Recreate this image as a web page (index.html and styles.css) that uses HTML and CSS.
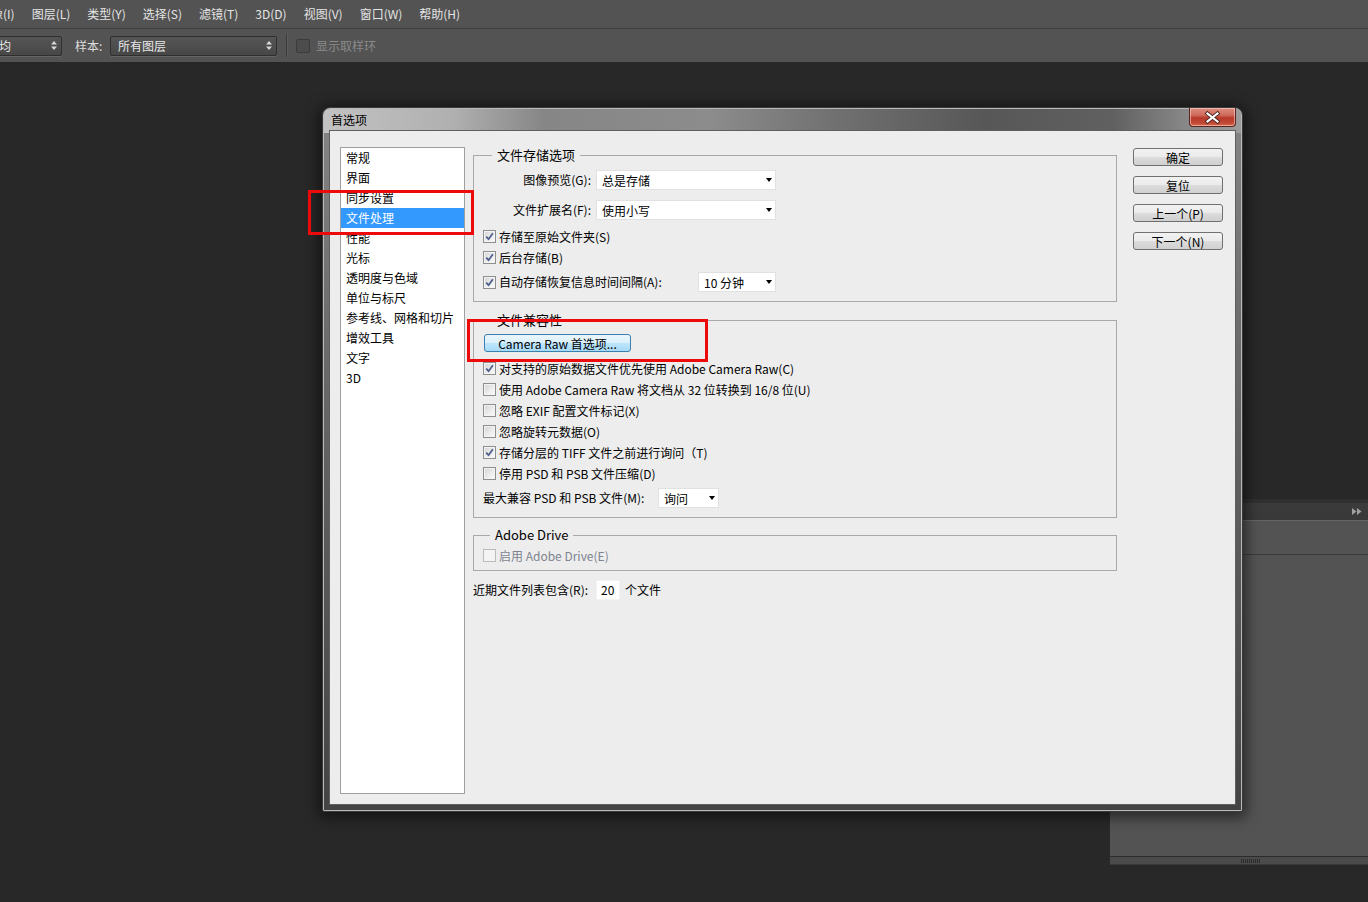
FILE: index.html
```html
<!DOCTYPE html>
<html lang="zh-CN">
<head>
<meta charset="utf-8">
<title>首选项</title>
<link rel="stylesheet" href="styles.css">
</head>
<body>
<div class="menubar">
  <span class="mi first">图像(I)</span>
  <span class="mi">图层(L)</span>
  <span class="mi">类型(Y)</span>
  <span class="mi">选择(S)</span>
  <span class="mi">滤镜(T)</span>
  <span class="mi">3D(D)</span>
  <span class="mi">视图(V)</span>
  <span class="mi">窗口(W)</span>
  <span class="mi">帮助(H)</span>
</div>
<div class="optbar">
  <div class="obox obox-a"><span>平均</span><svg class="updown" width="6" height="9" viewBox="0 0 6 9"><polygon points="0,3.5 3,0 6,3.5"/><polygon points="0,5.5 3,9 6,5.5"/></svg></div>
  <span class="olabel">样本:</span>
  <div class="obox obox-b"><span>所有图层</span><svg class="updown" width="6" height="9" viewBox="0 0 6 9"><polygon points="0,3.5 3,0 6,3.5"/><polygon points="0,5.5 3,9 6,5.5"/></svg></div>
  <div class="osep"></div>
  <div class="ocheck"></div>
  <span class="odisabled">显示取样环</span>
</div>
<div class="workspace">
  <div class="panel">
    <div class="ptabbar"><svg width="10" height="7" viewBox="0 0 10 7"><polygon points="0,0 4.5,3.5 0,7" fill="#a0a0a0"/><polygon points="5,0 9.5,3.5 5,7" fill="#a0a0a0"/></svg></div>
    <div class="psection"></div>
    <div class="pbody"></div>
    <div class="pfoot"><div class="grip"></div></div>
  </div>

  <div class="dialog">
    <div class="titlebar">
      <span class="title">首选项</span>
      <div class="close">
        <svg width="45" height="17" viewBox="0 0 45 17"><path d="M17.5 4.5 L27.5 12.5 M27.5 4.5 L17.5 12.5" stroke="#4a2420" stroke-width="4" stroke-linecap="square"/><path d="M17.5 4.5 L27.5 12.5 M27.5 4.5 L17.5 12.5" stroke="#ffffff" stroke-width="2.2" stroke-linecap="square"/></svg>
      </div>
    </div>
    <div class="client">
      <ul class="navlist">
        <li>常规</li>
        <li>界面</li>
        <li>同步设置</li>
        <li class="sel">文件处理</li>
        <li>性能</li>
        <li>光标</li>
        <li>透明度与色域</li>
        <li>单位与标尺</li>
        <li>参考线、网格和切片</li>
        <li>增效工具</li>
        <li>文字</li>
        <li>3D</li>
      </ul>

      <div class="main">
        <div class="group g1">
          <div class="group-title">文件存储选项</div>
          <div class="row field r-first">
            <span class="flabel">图像预览(G):</span>
            <div class="combo w180"><span>总是存储</span><i class="arrow"></i></div>
          </div>
          <div class="row field r-gap10">
            <span class="flabel">文件扩展名(F):</span>
            <div class="combo w180"><span>使用小写</span><i class="arrow"></i></div>
          </div>
          <div class="row check r-gap6">
            <span class="cb on"><svg width="11" height="11" viewBox="0 0 11 11"><path d="M2.2 5.6 L4.6 8.2 L8.9 2.3" fill="none" stroke="#4d5f8c" stroke-width="1.8"/></svg></span>
            <span class="txt">存储至原始文件夹(S)</span>
          </div>
          <div class="row check">
            <span class="cb on"><svg width="11" height="11" viewBox="0 0 11 11"><path d="M2.2 5.6 L4.6 8.2 L8.9 2.3" fill="none" stroke="#4d5f8c" stroke-width="1.8"/></svg></span>
            <span class="txt">后台存储(B)</span>
          </div>
          <div class="row field r-gap4">
            <div class="checklabel w215">
              <span class="cb on"><svg width="11" height="11" viewBox="0 0 11 11"><path d="M2.2 5.6 L4.6 8.2 L8.9 2.3" fill="none" stroke="#4d5f8c" stroke-width="1.8"/></svg></span>
              <span class="txt">自动存储恢复信息时间间隔(A):</span>
            </div>
            <div class="combo w78"><span>10 分钟</span><i class="arrow"></i></div>
          </div>
        </div>

        <div class="group g2">
          <div class="group-title">文件兼容性</div>
          <button class="hotbtn">Camera Raw 首选项...</button>
          <div class="row check r-gap6">
            <span class="cb on"><svg width="11" height="11" viewBox="0 0 11 11"><path d="M2.2 5.6 L4.6 8.2 L8.9 2.3" fill="none" stroke="#4d5f8c" stroke-width="1.8"/></svg></span>
            <span class="txt">对支持的原始数据文件优先使用 Adobe Camera Raw(C)</span>
          </div>
          <div class="row check">
            <span class="cb"></span>
            <span class="txt">使用 Adobe Camera Raw 将文档从 32 位转换到 16/8 位(U)</span>
          </div>
          <div class="row check">
            <span class="cb"></span>
            <span class="txt">忽略 EXIF 配置文件标记(X)</span>
          </div>
          <div class="row check">
            <span class="cb"></span>
            <span class="txt">忽略旋转元数据(O)</span>
          </div>
          <div class="row check">
            <span class="cb on"><svg width="11" height="11" viewBox="0 0 11 11"><path d="M2.2 5.6 L4.6 8.2 L8.9 2.3" fill="none" stroke="#4d5f8c" stroke-width="1.8"/></svg></span>
            <span class="txt">存储分层的 TIFF 文件之前进行询问（T)</span>
          </div>
          <div class="row check">
            <span class="cb"></span>
            <span class="txt">停用 PSD 和 PSB 文件压缩(D)</span>
          </div>
          <div class="row field r-gap4">
            <span class="plainlabel w175">最大兼容 PSD 和 PSB 文件(M):</span>
            <div class="combo w61"><span>询问</span><i class="arrow"></i></div>
          </div>
        </div>

        <div class="group g3">
          <div class="group-title">Adobe Drive</div>
          <div class="row check r-gap2 disabled">
            <span class="cb off"></span>
            <span class="txt">启用 Adobe Drive(E)</span>
          </div>
        </div>

        <div class="row field recent">
          <span class="plainlabel w123">近期文件列表包含(R):</span>
          <div class="numbox">20</div>
          <span class="suffix">个文件</span>
        </div>
      </div>

      <div class="buttons">
        <button class="btn">确定</button>
        <button class="btn">复位</button>
        <button class="btn">上一个(P)</button>
        <button class="btn">下一个(N)</button>
      </div>
    </div>
  </div>
</div>
<div class="mark mark1"></div>
<div class="mark mark2"></div>
</body>
</html>
```

FILE: styles.css
```css
* { box-sizing: border-box; }

html, body {
  margin: 0;
  padding: 0;
}

body {
  width: 1368px;
  height: 902px;
  overflow: hidden;
  position: relative;
  background: #282828;
  font-family: "Noto Sans CJK SC", "Noto Sans", sans-serif;
  font-size: 12px;
  display: flex;
  flex-direction: column;
}

/* ---------- Photoshop menu bar ---------- */
.menubar {
  height: 29px;
  flex: 0 0 29px;
  background: #535353;
  border-bottom: 1px solid #3d3d3d;
  display: flex;
  align-items: center;
  gap: 17px;
  color: #e4e4e4;
  white-space: nowrap;
  line-height: 16px;
}
.menubar .first { margin-left: -21px; }

/* ---------- options bar ---------- */
.optbar {
  height: 33px;
  flex: 0 0 33px;
  background: #535353;
  display: flex;
  align-items: center;
  color: #dcdcdc;
  white-space: nowrap;
}
.obox {
  height: 20px;
  display: flex;
  align-items: center;
  border: 1px solid #2f2f2f;
  border-radius: 2px;
  background: linear-gradient(#555555, #474747);
  box-shadow: 0 1px 0 #656565;
  color: #e8e8e8;
  padding-right: 4px;
}
.obox span { flex: 1; }
.obox-a { width: 82px; margin-left: -20px; padding-left: 6px; }
.obox-b { width: 167px; padding-left: 7px; }
.updown { fill: #d8d8d8; }
.olabel { margin-left: 13px; width: 35px; }
.osep {
  width: 2px;
  height: 23px;
  margin-left: 9px;
  background: #3a3a3a;
  border-right: 1px solid #5e5e5e;
}
.ocheck {
  width: 14px;
  height: 14px;
  margin-left: 8px;
  border: 1px solid #3b3b3b;
  border-radius: 2px;
  background: #4c4c4c;
}
.odisabled { margin-left: 6px; color: #8a8a8a; }

/* ---------- workspace ---------- */
.workspace {
  flex: 1;
  position: relative;
}

/* floating panel */
.panel {
  position: absolute;
  left: 1109px;
  top: 437px;
  width: 259px;
  height: 366px;
  border-left: 1px solid #2a2a2a;
  display: flex;
  flex-direction: column;
  background: #535353;
}
.ptabbar {
  height: 22px;
  flex: 0 0 22px;
  background: linear-gradient(#303030 0, #303030 4px, #3b3b3b 4px, #393939 100%);
  border-bottom: 1px solid #666666;
  display: flex;
  justify-content: flex-end;
  align-items: center;
  padding: 4px 6px 0 0;
}
.psection {
  height: 34px;
  flex: 0 0 34px;
  background: #535353;
  border-bottom: 1px solid #3a3a3a;
  box-shadow: 0 1px 0 #5d5d5d;
}
.pbody { flex: 1; background: #535353; }
.pfoot {
  height: 9px;
  flex: 0 0 9px;
  border-top: 1px solid #2c2c2c;
  border-bottom: 1px solid #3a3a3a;
  background: #4b4b4b;
  display: flex;
  align-items: center;
}
.grip {
  margin-left: 131px;
  width: 20px;
  height: 4px;
  background: repeating-linear-gradient(90deg, #2b2b2b 0, #2b2b2b 1px, transparent 1px, transparent 2px);
}

/* ---------- dialog window ---------- */
.dialog {
  position: absolute;
  left: 323px;
  top: 46px;
  width: 919px;
  height: 703px;
  border: 1px solid #b9b9b9;
  border-radius: 7px 7px 1px 1px;
  padding: 0 5px 5px;
  display: flex;
  flex-direction: column;
  background:
    linear-gradient(90deg, #c2c2c2 0%, #b0b0b0 14%, #868686 24%, #8c8c8c 42%, #707070 56%, #575757 72%, #606060 86%, #888888 94%, #9c9c9c 100%) top / 100% 24px no-repeat,
    linear-gradient(#858585 0%, #6a6a6a 35%, #444444 100%);
  box-shadow: 0 0 0 1px #3a3a3a, 0 2px 14px 4px rgba(0, 0, 0, 0.55);
}
.titlebar {
  height: 21px;
  flex: 0 0 21px;
  display: flex;
  align-items: flex-start;
}
.title {
  margin: 3px 0 0 2px;
  line-height: 16px;
  color: #000;
}
.close {
  margin-left: auto;
  margin-top: -1px;
  width: 47px;
  height: 19px;
  border: 1px solid #5a2520;
  border-top: 0;
  border-radius: 0 0 4px 4px;
  background: linear-gradient(#dc8d80 0%, #cf6a5a 40%, #b8392a 55%, #c24a35 85%, #d86f52 100%);
  box-shadow: inset 0 0 0 1px rgba(255, 220, 210, 0.55);
  display: flex;
  align-items: center;
  justify-content: center;
}

.client {
  flex: 1;
  border: 1px solid #5f5f5f;
  background: #ededed;
  display: flex;
  align-items: stretch;
  padding: 16px 12px 10px 10px;
  color: #000;
}

/* left navigation list */
.navlist {
  list-style: none;
  margin: 0;
  padding: 0;
  width: 125px;
  flex: 0 0 125px;
  background: #fff;
  border: 1px solid #9f9f9f;
}
.navlist li {
  height: 20px;
  line-height: 19px;
  padding-left: 5px;
  white-space: nowrap;
}
.navlist li.sel {
  background: #3399ff;
  color: #fff;
}

/* main column */
.main {
  width: 644px;
  flex: 0 0 644px;
  margin-left: 8px;
  align-self: flex-start;
}
.group {
  border: 1px solid #a9a9a9;
  padding: 0 9px 9px;
}
.g1 { margin-top: 8px; }
.g2 { margin-top: 18px; }
.g3 { margin-top: 17px; padding-bottom: 4px; }
.group-title {
  width: max-content;
  margin: -9px 0 0 9px;
  padding: 0 5px;
  background: #ededed;
  font-size: 13px;
  line-height: 15px;
  padding-bottom: 1px;
}
.g3 .group-title { margin-left: 7px; }

.row {
  display: flex;
  align-items: center;
  white-space: nowrap;
  line-height: 15px;
}
.row.field { height: 20px; }
.row.check { height: 21px; }
.r-first { margin-top: 7px; }
.r-gap10 { margin-top: 10px; }
.r-gap6 { margin-top: 6px; }
.r-gap4 { margin-top: 4px; }
.r-gap2 { margin-top: 2px; }
.txt { padding-bottom: 1px; }

.flabel {
  width: 108px;
  text-align: right;
  margin-right: 5px;
  padding-bottom: 1px;
}
.plainlabel { flex: 0 0 auto; padding-bottom: 1px; }
.w175 { width: 175px; }
.w123 { width: 123px; }
.checklabel {
  display: flex;
  align-items: center;
}
.w215 { width: 215px; }

.combo {
  height: 20px;
  display: flex;
  align-items: center;
  background: #fff;
  border: 1px solid #e1e1e1;
  padding-left: 5px;
}
.combo span { flex: 1; }
.w180 { width: 180px; }
.w78 { width: 78px; }
.w61 { width: 61px; }
.arrow {
  width: 0;
  height: 0;
  margin-right: 3px;
  border-left: 3.5px solid transparent;
  border-right: 3.5px solid transparent;
  border-top: 4px solid #000;
}

.cb {
  width: 13px;
  height: 13px;
  flex: 0 0 13px;
  margin-right: 3px;
  border: 1px solid #8e8f8f;
  background: linear-gradient(135deg, #d3d3d3 0%, #eeeeee 60%, #fbfbfb 100%);
  box-shadow: inset 0 0 0 1px #f3f3f3;
  display: flex;
  align-items: center;
  justify-content: center;
}
.cb.off {
  border-color: #bcbcbc;
  background: #f4f4f4;
}
.disabled { color: #7e8490; }

.hotbtn {
  display: block;
  margin: 6px 0 0 1px;
  width: 147px;
  height: 18px;
  padding: 0;
  border: 1px solid #3c7fb1;
  border-radius: 3px;
  background: linear-gradient(#eaf6fd 0%, #d9f0fc 50%, #bee6fd 51%, #a7d9f5 100%);
  font-family: inherit;
  font-size: 12px;
  line-height: 15px;
  color: #000;
}

.recent { margin-top: 9px; }
.numbox {
  width: 24px;
  height: 20px;
  background: #fff;
  border: 1px solid #f2f2f2;
  line-height: 17px;
  padding-left: 4px;
}
.suffix { margin-left: 5px; padding-bottom: 1px; }

/* right button column */
.buttons {
  width: 90px;
  flex: 0 0 90px;
  margin-left: 16px;
  padding-top: 1px;
  display: flex;
  flex-direction: column;
  gap: 10px;
  align-self: flex-start;
}
.btn {
  height: 18px;
  width: 90px;
  padding: 0;
  border: 1px solid #707070;
  border-radius: 3px;
  background: linear-gradient(#f2f2f2 0%, #ebebeb 50%, #dddddd 51%, #cfcfcf 100%);
  font-family: inherit;
  font-size: 12px;
  line-height: 15px;
  color: #000;
}

/* red annotation boxes */
.mark {
  position: absolute;
  border: 3px solid #ee0a0a;
}
.mark1 { left: 308px; top: 190px; width: 166px; height: 45px; }
.mark2 { left: 467px; top: 319px; width: 241px; height: 43px; }
```
